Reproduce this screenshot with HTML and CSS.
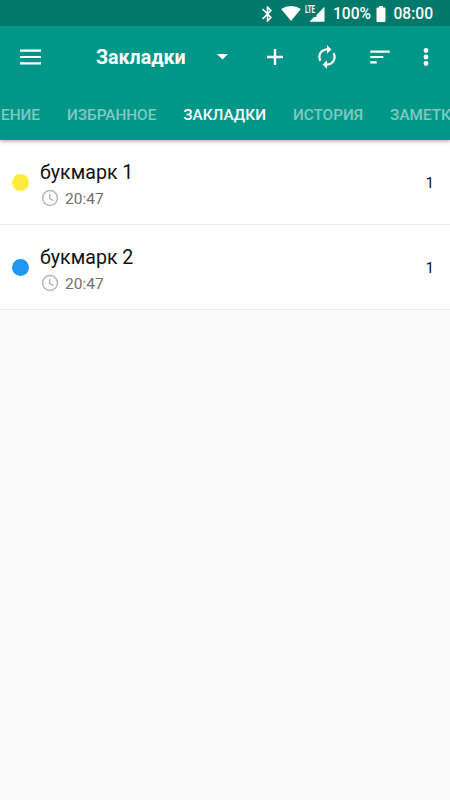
FILE: index.html
```html
<!DOCTYPE html>
<html lang="ru">
<head>
<meta charset="utf-8">
<title>Закладки</title>
<link rel="stylesheet" href="styles.css">
</head>
<body>
<div class="app">
  <header class="header">
    <div class="status">
      <svg class="bluetooth" viewBox="5 2 14 20" preserveAspectRatio="none"><path d="M17.71 7.71 12 2h-1v7.59L6.41 5 5 6.41 10.59 12 5 17.59 6.41 19 11 14.41V22h1l5.71-5.71-4.3-4.29 4.3-4.29zM13 5.83l1.88 1.88L13 9.59V5.83zm1.88 10.46L13 18.17v-3.76l1.88 1.88z"/></svg>
      <svg class="wifi" viewBox="0 0 20 15"><path d="M10 15 .2 3Q4.600 0 10 0t9.800 3z"/></svg>
      <div class="signal">
        <svg viewBox="0 0 20 16"><path d="M19.500.800V15.800H4.500l4.500-4.800h2.500V9z"/></svg>
        <span class="lte">LTE</span>
      </div>
      <span class="percent">100%</span>
      <svg class="battery" viewBox="0 0 10 16"><path d="M3 0h4v1.500h1.600q.9 0 .9.9v12.700q0 .9-.9.9H1.400q-.9 0-.9-.9V2.400q0-.9.9-.9H3z"/></svg>
      <span class="clock">08:00</span>
    </div>
    <div class="toolbar">
      <svg class="menu" viewBox="0 0 21 16"><path d="M0 .5h21v2.200H0zM0 6.900h21v2.200H0zM0 13.300h21v2.200H0z"/></svg>
      <h1 class="title">Закладки</h1>
      <svg class="caret" viewBox="0 0 11 6"><path d="M0 0h11L5.500 5.500z"/></svg>
      <svg class="icon add" viewBox="0 0 24 24"><path d="M19.400 13.100h-6.300v6.300h-2.200v-6.300H4.600v-2.200h6.300V4.600h2.200v6.300h6.300z"/></svg>
      <svg class="icon sync" viewBox="0 0 24 24"><path d="M12 6v3l4-4-4-4v3c-4.420 0-8 3.580-8 8 0 1.570.46 3.030 1.240 4.260L6.700 14.800c-.45-.83-.7-1.790-.7-2.800 0-3.310 2.690-6 6-6zm6.760 1.740L17.300 9.200c.44.84.7 1.790.7 2.800 0 3.310-2.690 6-6 6v-3l-4 4 4 4v-3c4.420 0 8-3.580 8-8 0-1.570-.46-3.030-1.240-4.260z"/></svg>
      <svg class="icon sort" viewBox="0 0 24 24"><path d="M3 18h6v-2H3v2zM3 6v2h18V6H3zm0 7h12v-2H3v2z"/></svg>
      <svg class="icon more" viewBox="0 0 24 24"><circle cx="12" cy="6" r="2.200"/><circle cx="12" cy="12" r="2.200"/><circle cx="12" cy="18" r="2.200"/></svg>
    </div>
    <nav class="tabs">
      <span class="tab first">ЕНИЕ</span>
      <span class="tab">ИЗБРАННОЕ</span>
      <span class="tab active">ЗАКЛАДКИ</span>
      <span class="tab">ИСТОРИЯ</span>
      <span class="tab">ЗАМЕТКИ</span>
    </nav>
  </header>
  <main class="list">
    <div class="row">
      <span class="dot yellow"></span>
      <div class="info">
        <div class="name">букмарк 1</div>
        <div class="time"><svg class="watch" viewBox="0 0 18 18"><circle cx="9" cy="9" r="7.500"/><path d="M8.700 4.700v4.600l3.700 2.300"/></svg>20:47</div>
      </div>
      <span class="count">1</span>
    </div>
    <div class="row">
      <span class="dot blue"></span>
      <div class="info">
        <div class="name">букмарк 2</div>
        <div class="time"><svg class="watch" viewBox="0 0 18 18"><circle cx="9" cy="9" r="7.500"/><path d="M8.700 4.700v4.600l3.700 2.300"/></svg>20:47</div>
      </div>
      <span class="count">1</span>
    </div>
  </main>
</div>
</body>
</html>
```
FILE: styles.css
```css
* { box-sizing: border-box; }
body { margin: 0; font-family: Roboto, sans-serif; background: #fafafa; }
svg { display: block; flex: none; fill: #fff; }
.app { width: 450px; height: 800px; overflow: hidden; }
.header { position: relative; height: 140px; background: #009688; color: #fff; box-shadow: 0 1px 4px rgba(0, 0, 0, .4); }
.status { display: flex; align-items: center; height: 26px; padding: 1px 0 0 262px; background: #00796b; font-size: 15.600px; font-weight: 500; line-height: 26px; white-space: nowrap; }
.bluetooth { width: 11px; height: 16px; }
.wifi { width: 20px; height: 15px; margin-left: 8px; }
.signal { position: relative; width: 20px; margin-left: 4px; }
.signal svg { width: 20px; height: 16px; }
.lte { position: absolute; left: 0; top: 0; font-size: 10px; line-height: 8px; font-weight: 700; transform: scaleX(.62); transform-origin: left; }
.percent { width: 38px; margin-left: 8px; }
.battery { width: 10px; height: 16px; margin-left: 4.500px; }
.clock { margin-left: 8px; }
.toolbar { display: flex; align-items: center; height: 61px; }
.menu { width: 21px; height: 16px; margin-left: 20px; }
.title { width: 90px; margin: 2px 0 0 55px; font-size: 19.600px; font-weight: 700; line-height: 29px; white-space: nowrap; }
.caret { width: 11px; height: 6px; margin-left: 31px; }
.icon { width: 26px; height: 26px; }
.add { margin-left: 34px; }
.sync { margin-left: 26px; }
.sort { margin-left: 27px; }
.more { margin-left: 20px; }
.tabs { display: flex; gap: 27px; height: 53px; line-height: 56px; overflow: hidden; white-space: nowrap; font-size: 15.300px; font-weight: 500; }
.tab { flex: none; color: rgba(255, 255, 255, .5); }
.tab.first { margin-left: 1px; }
.tab.active { color: #fff; }
.row { display: flex; align-items: center; height: 85px; padding: 0 16px 0 12px; background: #fff; border-bottom: 1px solid #ececec; }
.dot { width: 17px; height: 17px; border-radius: 50%; }
.yellow { background: #ffeb3b; }
.blue { background: #2196f3; }
.info { flex: 1; margin-left: 11px; padding-top: 8px; }
.name { font-size: 19.600px; line-height: 26px; color: #111; }
.time { display: flex; align-items: center; gap: 6px; font-size: 15.500px; line-height: 27px; color: #707070; }
.watch { width: 18px; height: 18px; fill: none; stroke: #b8b8b8; stroke-width: 1.500; }
.time .watch { margin: 0 0 2px 1px; }
.count { padding-top: 2px; font-size: 15.300px; color: #111; }
```
